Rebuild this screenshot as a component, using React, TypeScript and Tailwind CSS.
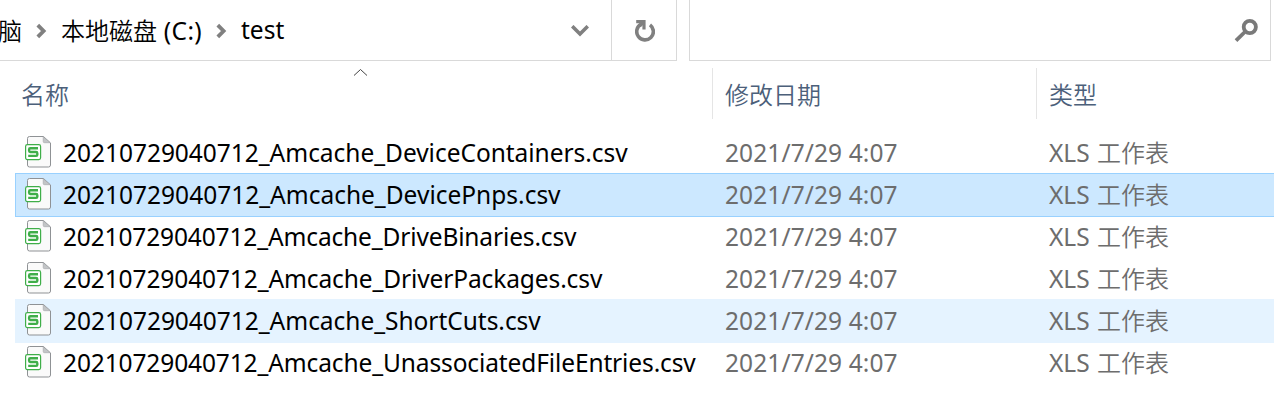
import React from "react";

type FileRow = { name: string; spacing: string; state?: "selected" | "hover" };

const files: FileRow[] = [
  { name: "20210729040712_Amcache_DeviceContainers.csv", spacing: "tracking-[-0.03px]" },
  { name: "20210729040712_Amcache_DevicePnps.csv", spacing: "tracking-[0px]", state: "selected" },
  { name: "20210729040712_Amcache_DriveBinaries.csv", spacing: "tracking-[-0.14px]" },
  { name: "20210729040712_Amcache_DriverPackages.csv", spacing: "tracking-[-0.11px]" },
  { name: "20210729040712_Amcache_ShortCuts.csv", spacing: "tracking-[-0.03px]", state: "hover" },
  { name: "20210729040712_Amcache_UnassociatedFileEntries.csv", spacing: "tracking-[-0.12px]" },
];

function Separator() {
  return (
    <svg className="mt-px h-4 w-[11px] shrink-0" viewBox="0 0 11 16" fill="none" stroke="#808080" strokeWidth="3.8">
      <path d="M1.8 2.2 7.6 8 1.8 13.8" />
    </svg>
  );
}

function SheetIcon() {
  return (
    <svg className="-mt-[2px] h-8 w-[27px] shrink-0" viewBox="0 0 27 32" fill="none">
      <path d="M4.5.5H18.5L25.5 7v22a2 2 0 0 1-2 2h-19a2 2 0 0 1-2-2V2.5a2 2 0 0 1 2-2z" fill="#fafafa" stroke="#8f9295" />
      <path d="M18.2.8V5.4a1.3 1.3 0 0 0 1.3 1.3h5.8z" fill="#c3c5c7" stroke="#a2a5a8" strokeWidth=".6" />
      <rect x=".6" y="8.6" width="15" height="15" rx="1.8" fill="#fff" stroke="#3fae49" strokeWidth="1.2" />
      <path d="M13 12.2H5.3a1.2 1.2 0 0 0-1.2 1.2v1.4A1.2 1.2 0 0 0 5.3 16h5.8a1.2 1.2 0 0 1 1.2 1.2v1.5a1.2 1.2 0 0 1-1.2 1.2H3.2" stroke="#3fae49" strokeWidth="2.4" />
    </svg>
  );
}

function Row({ file }: { file: FileRow }) {
  const tone =
    file.state === "selected"
      ? "border-[#99d1ff] bg-[#cce8ff]"
      : file.state === "hover"
        ? "border-[#e5f3ff] bg-[#e5f3ff]"
        : "border-transparent";
  return (
    <div className={`-my-px ml-[15px] flex h-11 items-center border-y border-l text-[24.5px] ${tone}`}>
      <div className="flex w-[709px] shrink-0 items-center gap-[11px] pl-[9px]">
        <SheetIcon />
        <span className={`text-black ${file.spacing}`}>{file.name}</span>
      </div>
      <span className="w-[324px] shrink-0 tracking-[0.1px] text-[#6d6d6d]">2021/7/29 4:07</span>
      <span className="text-[#6d6d6d]">
        XLS <span className="ml-px text-[24px] font-[350]">工作表</span>
      </span>
    </div>
  );
}

export default function App() {
  return (
    <div className="h-[416px] w-[1274px] overflow-hidden bg-white font-['Noto_Sans','Noto_Sans_CJK_SC',sans-serif] text-[24px] leading-[34px] whitespace-nowrap">
      <div className="flex h-[61px] gap-3">
        <div className="flex h-full w-[677px] border-r border-b border-[#d9d9d9]">
          <div className="flex flex-1 items-center">
            <span className="mt-px -ml-[2px] w-[38px] font-[350] text-black">脑</span>
            <Separator />
            <span className="mt-px ml-[14px] w-[155px] text-[24.5px] text-black">
              <span className="text-[24px] font-[350]">本地磁盘</span>
              <span className="tracking-[0.4px]"> (C:)</span>
            </span>
            <Separator />
            <span className="ml-[14px] text-[24.5px] text-black">test</span>
            <svg className="mt-px mr-[22px] ml-auto h-3 w-[18px]" viewBox="0 0 18 12" fill="none" stroke="#808080" strokeWidth="3.6">
              <path d="M1.2 1.2 9 9 16.8 1.2" />
            </svg>
          </div>
          <div className="flex w-[65px] items-center justify-center border-l border-[#d9d9d9]">
            <svg className="mt-px ml-px h-[22px] w-5" viewBox="0 0 20 22" fill="none" stroke="#808080">
              <path d="M15 4.9A8.3 8.3 0 1 1 6.2 4.2" strokeWidth="3.6" />
              <path d="M1.2 1.6H9v7.8" strokeWidth="3.2" />
              <path d="M4.5 6 8.5 2.5" strokeWidth="3" />
            </svg>
          </div>
        </div>
        <div className="flex h-full w-[582px] items-center justify-end border-x border-b border-[#d9d9d9] pr-3">
          <svg className="h-6 w-6" viewBox="0 0 24 24" fill="none" stroke="#7a7a7a">
            <circle cx="15.8" cy="9" r="6.1" strokeWidth="3.8" />
            <path d="M11.3 13.5 2 22.6" strokeWidth="3.8" />
          </svg>
        </div>
      </div>
      <div className="flex h-[71px] pt-[7px] font-[350] text-[#4c607a]">
        <div className="relative h-[51px] w-[713px] border-r border-[#e5e5e5] pt-[10px] pl-[21px]">
          名称
          <svg className="absolute top-0 left-[353px] h-2 w-[15px]" viewBox="0 0 15 8" fill="none" stroke="#444">
            <path d="m1 7.5 6.5-6 6.5 6" />
          </svg>
        </div>
        <div className="h-[51px] w-[324px] border-r border-[#e5e5e5] pt-[10px] pl-3">修改日期</div>
        <div className="pt-[10px] pl-3">类型</div>
      </div>
      <div className="flex flex-col">
        {files.map((file) => (
          <Row key={file.name} file={file} />
        ))}
      </div>
    </div>
  );
}
